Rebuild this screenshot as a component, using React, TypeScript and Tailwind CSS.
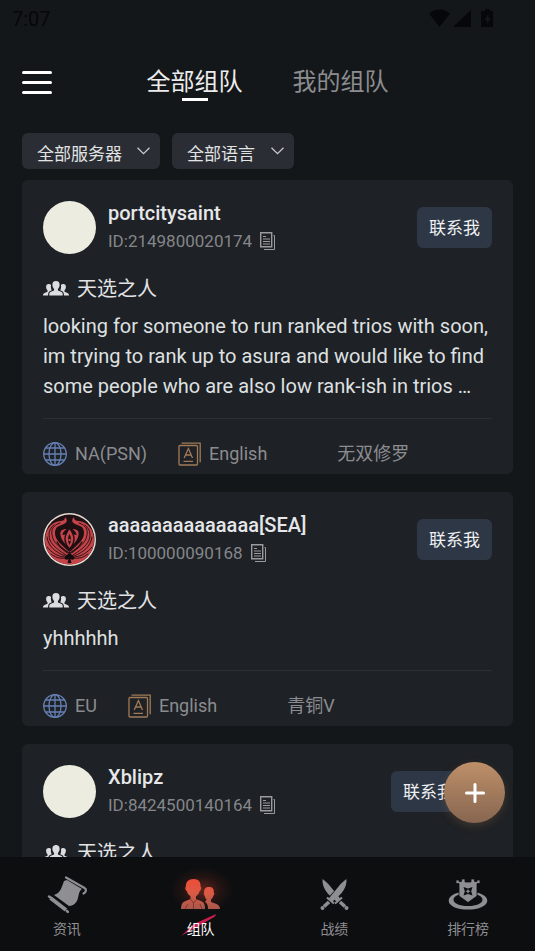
import { useState } from 'react';
import type { ReactNode } from 'react';

type Post = {
  id: string;
  name: string;
  mode: string;
  message?: string;
  server?: string;
  language?: string;
  rank?: string;
  emblem?: boolean;
  buttonClass?: string;
};

const posts: Post[] = [
  {
    id: '2149800020174',
    name: 'portcitysaint',
    mode: '天选之人',
    message:
      'looking for someone to run ranked trios with soon, im trying to rank up to asura and would like to find some people who are also low rank-ish in trios …',
    server: 'NA(PSN)',
    language: 'English',
    rank: '无双修罗',
  },
  {
    id: '100000090168',
    name: 'aaaaaaaaaaaaaa[SEA]',
    mode: '天选之人',
    message: 'yhhhhhh',
    server: 'EU',
    language: 'English',
    rank: '青铜V',
    emblem: true,
  },
  {
    id: '8424500140164',
    name: 'Xblipz',
    mode: '天选之人',
    buttonClass: 'mr-[26px]',
  },
];

function StatusBar() {
  return (
    <div className="flex h-9 shrink-0 items-center justify-between pl-3 pr-10 pt-0.5 text-[#050708]">
      <span className="text-xl">7:07</span>
      <svg width="66" height="20" viewBox="0 0 66 20" fill="currentColor" aria-hidden="true">
        <path d="M0 4.500C6-1 15-1 21 4.500L10.500 18z" />
        <path d="M24 18L42 1v17z" />
        <path fillRule="evenodd" d="M56 0h5v2h3v16H52V2h4zM59.500 5l-4 6H58v4l4-6h-2.500z" />
      </svg>
    </div>
  );
}

function Header() {
  const [tab, setTab] = useState(0);
  return (
    <header className="grid h-[90px] shrink-0 grid-cols-[30px_1fr_30px] items-center px-[22px] pt-0.5">
      <button type="button" aria-label="菜单" className="flex flex-col gap-[7px]">
        <span className="h-[3px] w-[30px] rounded-sm bg-white" />
        <span className="h-[3px] w-[30px] rounded-sm bg-white" />
        <span className="h-[3px] w-[30px] rounded-sm bg-white" />
      </button>
      <div className="flex justify-center gap-[50px]">
        {['全部组队', '我的组队'].map((label, i) => (
          <button
            key={label}
            type="button"
            onClick={() => setTab(i)}
            className={`relative text-2xl leading-8 ${tab === i ? 'text-[#ececec]' : 'text-[#8c8d8f]'}`}
          >
            {label}
            {tab === i && (
              <span className="absolute -bottom-[3px] left-1/2 h-[3px] w-[26px] -translate-x-1/2 bg-white" />
            )}
          </button>
        ))}
      </div>
    </header>
  );
}

function Filter({ label, options, className }: { label: string; options: string[]; className: string }) {
  return (
    <div className={`relative h-9 ${className}`}>
      <select
        aria-label={label}
        className="h-full w-full appearance-none rounded-md bg-[#2a2d33] pl-[15px] pr-8 pt-2 text-[17px] text-[#e2e3e5]"
      >
        {options.map((o) => (
          <option key={o}>{o}</option>
        ))}
      </select>
      <svg
        className="pointer-events-none absolute right-2.5 top-3.5"
        width="13"
        height="8"
        viewBox="0 0 13 8"
        fill="none"
        stroke="#c9cacc"
        strokeWidth="1.300"
        aria-hidden="true"
      >
        <path d="M.5.700l6 6 6-6" />
      </svg>
    </div>
  );
}

/* Red winged crest used as a profile picture */
function Emblem() {
  const wing = (
    <g>
      <path
        fill="#c4444a"
        d="M22 4c3 3 2 6-1 7l-5 2c-3 1-4 4-4 7 0 7 6 11 12 17l2.500 2V53C12 52 2 40 2 27 2 17 8 9 17 8c3 0 5-1 5-4z"
      />
      <path
        fill="#c4444a"
        d="M26.500 17c-3 3-4 5-7 5 0-3 2-4 4-6-4 0-7 2-6 6 1 6 6 10 9 13z"
      />
      <g fill="none" stroke="#1d0f12" strokeLinecap="round" strokeWidth=".9">
        <path d="M17 10C10 12 8 17 9 22c1 8 8 12 15 18" />
        <path d="M11 12c-5 4-6 9-4 15 3 7 10 11 16 15" />
        <path d="M4 24c1 9 8 15 18 19" />
        <path d="M4 34c5 6 10 9 17 10M8 41c4 3 8 5 14 4" />
        <path d="M14 29c3 5 7 8 12 11" strokeWidth="1.400" />
      </g>
    </g>
  );
  return (
    <svg className="size-[53px] shrink-0" viewBox="0 0 53 53" aria-hidden="true">
      <circle cx="26.500" cy="26.500" r="26.500" fill="#e6dcd2" />
      <clipPath id="crest">
        <circle cx="26.500" cy="26.500" r="25" />
      </clipPath>
      <g clipPath="url(#crest)">
        <rect width="53" height="53" fill="#1d0f12" />
        {wing}
        <g transform="translate(53 0) scale(-1 1)">{wing}</g>
        <path d="M26.500 15c-6 8-6 14 0 21 6-7 6-13 0-21z" fill="#c4444a" stroke="#1d0f12" strokeWidth="1.400" />
        <path d="M26.500 21c-2 4-2 7 0 11 2-4 2-7 0-11z" fill="#1d0f12" />
        <circle cx="26.500" cy="27" r="1.200" fill="#c4444a" />
        <path d="M26.500 39c-1 3-5 3-5 6 0 2 3 2 4 1l-1 4h4l-1-4c1 1 4 1 4-1 0-3-4-3-5-6z" fill="#160c0e" />
      </g>
    </svg>
  );
}

function CopyIcon() {
  return (
    <svg width="16" height="18" viewBox="0 0 16 18" fill="none" stroke="#9a9b9e" aria-hidden="true">
      <path d="M.7.700h11v14H.7z" strokeWidth="1.400" />
      <path d="M3 4.500h3M3 7h7M3 9.500h7M3 12h7" strokeWidth="1.200" />
      <path d="M13.500 3.500h1v14H4" />
    </svg>
  );
}

function TeamIcon() {
  return (
    <svg width="26" height="16" viewBox="0 0 26 16" fill="#dcdde0" aria-hidden="true">
      <path d="M13 0c2.400 0 3.800 1.600 3.600 4-.1 1.900-.8 3-1.700 3.900v1.500l3.200 1.400c1.300.6 1.700 1.700 1.700 3.700H6.200c0-2 .4-3.100 1.700-3.700l3.200-1.400V7.900C10.200 7 9.500 5.900 9.400 4 9.200 1.600 10.600 0 13 0z" />
      <path d="M8 4c-.6-.8-1.400-1-2.200-1C4 3 3 4.200 3.100 6c.1 1.600.7 2.500 1.400 3.200v1.500l-3 1.300C.4 12.500 0 13.300 0 14.500h5c0-2.300.6-3.700 2-4.500l1.800-.8C8 8 7.700 6.500 8 4z" />
      <path d="M18 4c.6-.8 1.400-1 2.200-1 1.800 0 2.800 1.200 2.700 3-.1 1.600-.7 2.500-1.400 3.200v1.500l3 1.300c1.100.5 1.500 1.300 1.500 2.500h-5c0-2.300-.6-3.700-2-4.500l-1.800-.8c.8-1.200 1.100-2.700.8-5.200z" />
    </svg>
  );
}

function GlobeIcon() {
  return (
    <svg width="24" height="24" viewBox="0 0 24 24" fill="none" stroke="#6580b4" strokeWidth="1.300" aria-hidden="true">
      <circle cx="12" cy="12" r="11.300" />
      <ellipse cx="12" cy="12" rx="6" ry="11.300" />
      <path d="M12 .7v22.600M.7 12h22.600M2.500 6h19M2.500 18h19" />
    </svg>
  );
}

function LanguageIcon() {
  return (
    <svg width="23" height="24" viewBox="0 0 23 24" fill="none" stroke="#a07a57" strokeWidth="1.300" aria-hidden="true">
      <rect x="1" y="3.500" width="18.500" height="19.500" rx="1" />
      <path d="M3.500 1.200h18.700v19M6.200 16l4.200-9.500L14.500 16M7.500 13h5.500M5.500 19.300h9.500" />
    </svg>
  );
}

function PostCard({ post }: { post: Post }) {
  return (
    <article className="shrink-0 rounded-md bg-[#1e2125] px-[21px] pb-2 pt-[21px]">
      <div className="flex items-center">
        {post.emblem ? <Emblem /> : <span className="size-[53px] shrink-0 rounded-full bg-[#ecece0]" />}
        <div className="ml-3 flex flex-1 flex-col gap-1 self-start">
          <h2 className="text-xl font-medium leading-6 text-[#e6e7e9]">{post.name}</h2>
          <div className="flex items-center gap-2 text-[17px] leading-6 text-[#85868a]">
            <span>ID:{post.id}</span>
            <button type="button" aria-label="复制ID">
              <CopyIcon />
            </button>
          </div>
        </div>
        <button
          type="button"
          className={`h-[41px] rounded-md bg-[#2d3745] px-3 pt-0.5 text-[17px] text-[#f0f1f3] ${post.buttonClass ?? ''}`}
        >
          联系我
        </button>
      </div>
      <div className="mt-[21px] flex items-center gap-2 text-xl leading-7 text-[#e2e3e5]">
        <TeamIcon />
        <span>{post.mode}</span>
      </div>
      {post.message && (
        <p className="mb-[17px] mt-2 text-xl leading-[30px] text-[#dfe0e2]">{post.message}</p>
      )}
      {post.server && (
        <div className="flex items-center border-t border-[#2c3034] pt-[23px] text-lg leading-6 text-[#8b8c90]">
          <GlobeIcon />
          <span className="ml-2">{post.server}</span>
          <span className="ml-[31px] flex items-center gap-2">
            <LanguageIcon />
            {post.language}
          </span>
          <span className="ml-[70px]">{post.rank}</span>
        </div>
      )}
    </article>
  );
}

function ScrollIcon() {
  return (
    <svg width="40" height="38" viewBox="0 0 40 38" fill="#8f8f93" aria-hidden="true">
      <path d="M20 4l15 9c-3 2-3 5-4 9-1 4-4 8-9 8L7 19c7-2 8-9 10-14z" />
      <path d="M19 1.500L37.500 12c2 1 2 4-1 5.500" fill="none" stroke="#8f8f93" strokeWidth="2.200" strokeLinecap="round" />
      <path d="M3.500 22l15.500 12" stroke="#8f8f93" strokeWidth="3.800" />
      <path d="M2 20.500l1.500 1M20 35l.8.800" stroke="#8f8f93" strokeWidth="2.500" strokeLinecap="round" />
    </svg>
  );
}

function PartyIcon() {
  return (
    <svg width="72" height="56" viewBox="0 0 72 56" aria-hidden="true">
      <defs>
        <radialGradient id="glow">
          <stop offset="0" stopColor="#d8452a" stopOpacity=".4" />
          <stop offset=".6" stopColor="#d8452a" stopOpacity=".1" />
          <stop offset="1" stopColor="#d8452a" stopOpacity="0" />
        </radialGradient>
        <linearGradient id="ember" gradientUnits="userSpaceOnUse" x1="0" y1="12" x2="0" y2="42">
          <stop offset="0" stopColor="#ee4c36" />
          <stop offset=".45" stopColor="#dc5a45" />
          <stop offset="1" stopColor="#a8584c" />
        </linearGradient>
      </defs>
      <ellipse cx="37" cy="23" rx="32" ry="23" fill="url(#glow)" />
      <g fill="url(#ember)">
        <path d="M28.500 12c5 0 7.500 3 7 7.500 1.200.5.700 3.800-.8 4.500-.7 2.500-2 4.300-3.700 5.200V32l6 2.500c2.300 1 3 4 3 7.500H16c0-3.500 1-6.500 3.500-7.500l6-2.500v-2.800c-1.700-.9-3-2.700-3.700-5.200-1.500-.7-2-4-.8-4.500-.5-4.500 2.500-7.500 7.500-7.500z" />
        <path d="M44 20c3.500 0 5.200 2 4.800 5.500.9.500.5 2.800-.5 3.200-.5 1.800-1.200 3-2.300 3.600V35l5.500 2c2.500 1 3.500 3 3.500 5H43c0-4-1-6-3-7l1.700-2.500c-1.200-1-1.700-2-2-3.800-1-.4-1.300-2.700-.5-3.200-.4-3.500 1.300-5.500 4.800-5.500z" />
      </g>
      <path
        d="M25.500 32l3 4 3.500-4M20 42l3-5M28.500 36v6M37 42l-2-5"
        stroke="#7a2f28"
        strokeWidth=".8"
        fill="none"
      />
    </svg>
  );
}

function SwordsIcon() {
  const sword = (
    <g>
      <path d="M27.500 0C28 9 23 15 13.500 22.500L10 19.300 20 7c2-3 5-5 7.500-7z" />
      <path d="M8 18.500l7 6" fill="none" stroke="#8f8f93" strokeWidth="2.200" />
      <path d="M10 23l-5 4.500" fill="none" stroke="#8f8f93" strokeWidth="3.600" />
      <circle cx="3.500" cy="29" r="2" />
    </g>
  );
  return (
    <svg width="30" height="32" viewBox="0 0 30 32" fill="#8f8f93" aria-hidden="true">
      <g transform="translate(31 0) scale(-1 1)">{sword}</g>
      <path d="M22 9L12 20" stroke="#0d0e10" strokeWidth="6" />
      {sword}
    </svg>
  );
}

function RankIcon() {
  return (
    <svg width="40" height="32" viewBox="0 0 40 32" fill="#8f8f93" aria-hidden="true">
      <path
        fillRule="evenodd"
        d="M20 12.500c11 0 19.300 4 19.300 9.200S31 30.500 20 30.500.7 27 .7 21.700 9 12.500 20 12.500zM20 14.500c-8.500 0-14.500 2.500-14.500 6.200S11.500 27 20 27s14.500-2.600 14.500-6.300-6-6.200-14.500-6.200z"
      />
      <path
        d="M8 1h3v1.500h2.500V0h3.500v3h6V0h3.500v2.500H29V1h3v3.500h-3V17l-9 6.500-9-6.500V4.500H8z"
        stroke="#0d0e10"
        strokeWidth=".8"
      />
      <path
        d="M15.500 8l4.500 1.500L24.500 8l-1.300 4.300 1.300 4.200-4.500-1.500-4.500 1.500 1.300-4.200z"
        fill="#0d0e10"
      />
      <path d="M20 10l.8 1.600 1.700.7-1.700.8L20 14.700l-.8-1.600-1.700-.8 1.700-.7z" />
    </svg>
  );
}

function NavItem({ label, active, children }: { label: string; active?: boolean; children: ReactNode }) {
  return (
    <button
      type="button"
      aria-current={active ? 'page' : undefined}
      className="flex flex-1 flex-col items-center pt-[19px]"
    >
      <span className="flex h-[38px] items-center justify-center">{children}</span>
      <span
        className={`relative mt-1 text-sm leading-[22px] ${active ? 'text-white' : 'text-[#8f8f93]'}`}
      >
        {active && (
          <svg
            className="absolute -left-1.5 -top-1"
            width="36"
            height="23"
            viewBox="0 0 36 23"
            fill="#c81f4c"
            aria-hidden="true"
          >
            <path d="M0 22l13-12L35 0l-1 2.500L16 13z" />
          </svg>
        )}
        <span className="relative">{label}</span>
      </span>
    </button>
  );
}

export default function App() {
  return (
    <div className="relative flex h-screen flex-col overflow-hidden bg-[#14171a] font-[Roboto,'Noto_Sans_CJK_SC',sans-serif]">
      <StatusBar />
      <Header />
      <div className="mt-[7px] flex shrink-0 gap-3 px-[22px]">
        <Filter label="服务器" options={['全部服务器', 'NA', 'EU', 'SEA']} className="w-[138px]" />
        <Filter label="语言" options={['全部语言', 'English', '中文']} className="w-[122px]" />
      </div>
      <main className="mt-[11px] flex min-h-0 flex-1 flex-col gap-[18px] overflow-hidden px-[22px]">
        {posts.map((post) => (
          <PostCard key={post.id} post={post} />
        ))}
      </main>
      <nav className="flex h-[94px] shrink-0 bg-[#0d0e10]">
        <NavItem label="资讯">
          <ScrollIcon />
        </NavItem>
        <NavItem label="组队" active>
          <PartyIcon />
        </NavItem>
        <NavItem label="战绩">
          <SwordsIcon />
        </NavItem>
        <NavItem label="排行榜">
          <RankIcon />
        </NavItem>
      </nav>
      <button
        type="button"
        aria-label="发布组队"
        className="absolute bottom-32 right-[30px] flex size-[61px] items-center justify-center rounded-full bg-linear-to-b from-[#be9069] to-[#876650] shadow-[0_3px_8px_rgba(140,100,70,0.3)]"
      >
        <svg width="20" height="20" viewBox="0 0 20 20" stroke="#fff" strokeWidth="3" strokeLinecap="round" aria-hidden="true">
          <path d="M10 1.500v17M1.500 10h17" />
        </svg>
      </button>
    </div>
  );
}
